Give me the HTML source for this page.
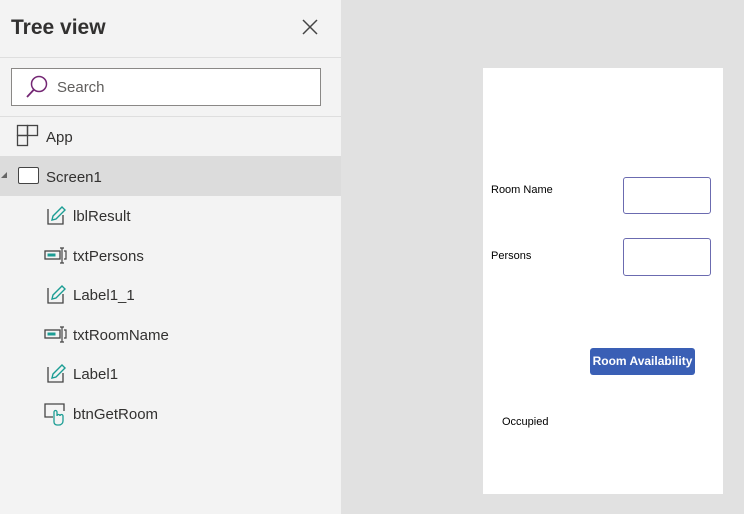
<!DOCTYPE html>
<html><head><style>
*{margin:0;padding:0;box-sizing:border-box}
body{width:744px;height:514px;overflow:hidden;background:#e1e1e1;font-family:"Liberation Sans",sans-serif;position:relative}
#left{position:absolute;left:0;top:0;width:341px;height:514px;background:#f3f3f3}
.abs{position:absolute}
.t{position:absolute;font-size:15px;color:#323130}
.ic{position:absolute}
</style></head><body>
<div id="left">
  <div class="abs" style="left:11px;top:16px;font-size:21px;font-weight:bold;color:#323130">Tree view</div>
  <svg class="ic" style="left:301px;top:18px" width="18" height="18"><path d="M2 2L16 16M16 2L2 16" stroke="#444" stroke-width="1.5"/></svg>
  <div class="abs" style="left:0;top:57px;width:341px;height:1px;background:#dedede"></div>
  <div class="abs" style="left:11px;top:68px;width:310px;height:38px;border:1px solid #8a8886;background:#fff"></div>
  <svg class="ic" style="left:24px;top:75px" width="26" height="24"><circle cx="15" cy="9" r="7.5" fill="none" stroke="#742774" stroke-width="1.5"/><path d="M10 14.5L3 22" stroke="#742774" stroke-width="1.8"/></svg>
  <div class="t" style="left:57px;top:79px;font-size:15px;color:#605e5c">Search</div>
  <div class="abs" style="left:0;top:116px;width:341px;height:1px;background:#dedede"></div>
  <svg class="ic" style="left:16px;top:124px" width="24" height="24"><g fill="none" stroke="#444" stroke-width="1.3"><rect x="1.5" y="1.5" width="10" height="10"/><rect x="11.5" y="1.5" width="10" height="10"/><rect x="1.5" y="11.5" width="10" height="10"/></g></svg>
  <div class="t" style="left:46px;top:129px">App</div>
  <div class="abs" style="left:0;top:156px;width:341px;height:40px;background:#dcdcdc"></div>
  <svg class="ic" style="left:1px;top:171px" width="8" height="8"><path d="M6 1V7H0Z" fill="#666"/></svg>
  <div class="abs" style="left:18px;top:167px;width:21px;height:17px;border:1.3px solid #444;border-radius:2px;background:#fff"></div>
  <div class="t" style="left:46px;top:169px">Screen1</div>

  <svg class="ic" style="left:47px;top:205px" width="20" height="20"><path d="M1 4V19H16V10" fill="none" stroke="#444" stroke-width="1.3"/><path d="M5 15L6 11L15 2L18 5L9 14Z" fill="none" stroke="#1b9d94" stroke-width="1.4"/></svg>
  <div class="t" style="left:73px;top:208px">lblResult</div>
  <svg class="ic" style="left:44px;top:247px" width="24" height="18"><rect x="1" y="4" width="15" height="8" fill="none" stroke="#444" stroke-width="1.3"/><rect x="3.5" y="6.5" width="8" height="3" fill="#1b9d94"/><path d="M16 1H20M18 1V16M16 16H20M20 4H22V12H20" fill="none" stroke="#444" stroke-width="1.2"/></svg>
  <div class="t" style="left:73px;top:248px">txtPersons</div>
  <svg class="ic" style="left:47px;top:284px" width="20" height="20"><path d="M1 4V19H16V10" fill="none" stroke="#444" stroke-width="1.3"/><path d="M5 15L6 11L15 2L18 5L9 14Z" fill="none" stroke="#1b9d94" stroke-width="1.4"/></svg>
  <div class="t" style="left:73px;top:287px">Label1_1</div>
  <svg class="ic" style="left:44px;top:326px" width="24" height="18"><rect x="1" y="4" width="15" height="8" fill="none" stroke="#444" stroke-width="1.3"/><rect x="3.5" y="6.5" width="8" height="3" fill="#1b9d94"/><path d="M16 1H20M18 1V16M16 16H20M20 4H22V12H20" fill="none" stroke="#444" stroke-width="1.2"/></svg>
  <div class="t" style="left:73px;top:327px">txtRoomName</div>
  <svg class="ic" style="left:47px;top:363px" width="20" height="20"><path d="M1 4V19H16V10" fill="none" stroke="#444" stroke-width="1.3"/><path d="M5 15L6 11L15 2L18 5L9 14Z" fill="none" stroke="#1b9d94" stroke-width="1.4"/></svg>
  <div class="t" style="left:73px;top:366px">Label1</div>
  <svg class="ic" style="left:44px;top:402px" width="24" height="24"><path d="M9 15H1V2H20V9" fill="none" stroke="#444" stroke-width="1.3"/><path d="M10 20V10a1.5 1.5 0 0 1 3 0V14a1.5 1.5 0 0 1 3 0a1.5 1.5 0 0 1 3 0V19a4 4 0 0 1-4 4H13a3 3 0 0 1-3-3Z" fill="#f3f3f3" stroke="#1b9d94" stroke-width="1.3"/></svg>
  <div class="t" style="left:73px;top:406px">btnGetRoom</div>
</div>
<div class="abs" style="left:483px;top:68px;width:240px;height:426px;background:#fff"></div>
<div class="abs" style="left:491px;top:184px;font-size:11px;color:#000">Room Name</div>
<div class="abs" style="left:623px;top:177px;width:88px;height:37px;border:1px solid #6b6bb0;border-radius:3px"></div>
<div class="abs" style="left:491px;top:250px;font-size:11px;color:#000">Persons</div>
<div class="abs" style="left:623px;top:238px;width:88px;height:38px;border:1px solid #6b6bb0;border-radius:3px"></div>
<div class="abs" style="left:590px;top:348px;width:105px;height:27px;background:#3a5fb5;border-radius:3px;color:#fff;font-size:12px;font-weight:bold;text-align:center;line-height:27px">Room Availability</div>
<div class="abs" style="left:502px;top:416px;font-size:11px;color:#000">Occupied</div>
</body></html>
